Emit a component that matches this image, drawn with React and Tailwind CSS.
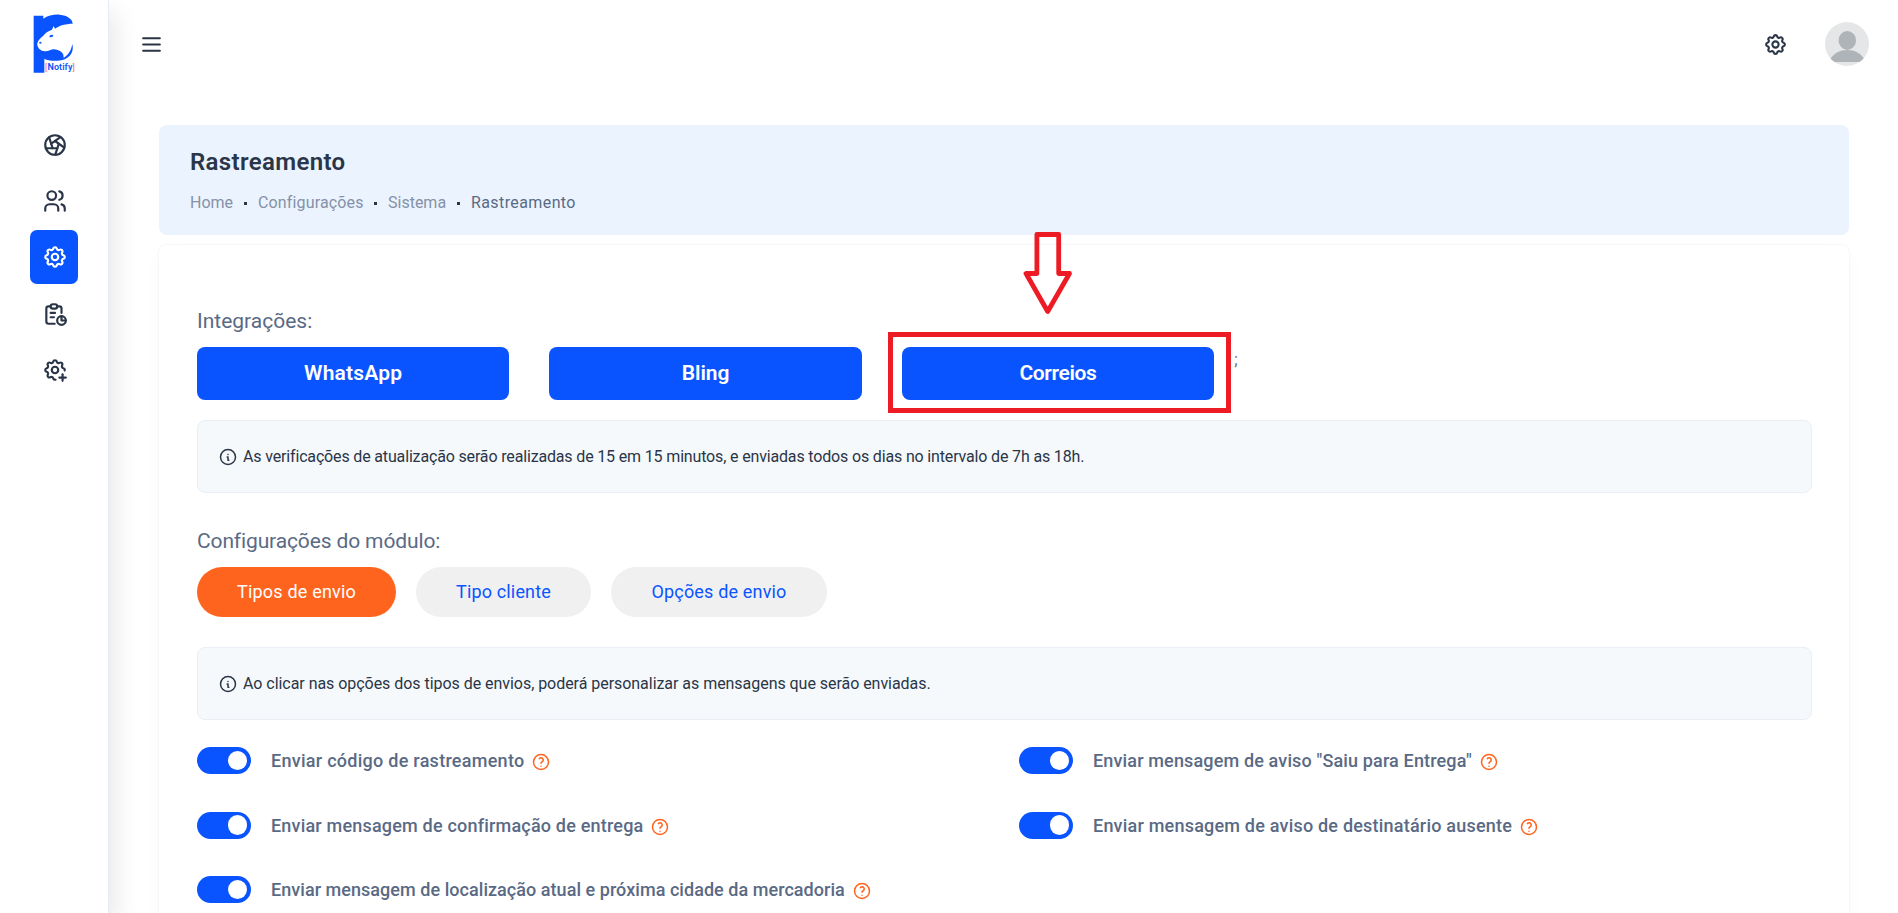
import {
  TbAperture,
  TbUsers,
  TbSettings,
  TbReport,
  TbSettingsPlus,
  TbMenu2,
  TbInfoCircle,
  TbHelp,
} from "react-icons/tb";

const navItems = [
  { name: "inicio", Icon: TbAperture },
  { name: "clientes", Icon: TbUsers },
  { name: "configuracoes", Icon: TbSettings, active: true },
  { name: "relatorios", Icon: TbReport },
  { name: "avancado", Icon: TbSettingsPlus },
];

function Logo() {
  return (
    <div className="relative h-[60px] w-[46px]">
      <svg viewBox="98 42 138 180" className="h-[60px] w-[46px]" fill="#0a54ff">
        <path d="M100 47H129V56C142 46 162 43 178 44C202 46 217 58 217 71C205 71 198 73 188 75C180 77 172 81 164 86L160 78L155 89C143 93 134 99 129 107C119 115 110 124 111 135C113 145 121 153 133 154C146 155 150 148 161 148C174 149 183 154 188 162C190 168 190 172 190 174C206 163 213 149 216 132C223 158 205 181 172 182C154 183 141 181 132 176V218H100Z" />
        <ellipse cx="153" cy="108" rx="6" ry="3.5" transform="rotate(-20 153 108)" />
        <ellipse cx="120" cy="128" rx="3.5" ry="3" />
      </svg>
      <span className="absolute top-[47px] left-[12.5px] text-[9px] leading-[12px] font-semibold tracking-[0.08px] whitespace-nowrap text-[#0a54ff]">
        <span className="font-normal text-[#ff6a2b]">[</span>Notify
        <span className="font-normal text-[#ff6a2b]">]</span>
      </span>
    </div>
  );
}

function Sidebar() {
  return (
    <aside className="z-10 flex w-[109px] shrink-0 flex-col items-center border-r border-[#e5eaf4] bg-white pt-[14px] shadow-[7px_12px_24px_0_rgba(0,0,0,0.09)]">
      <div className="pl-[3px]">
        <Logo />
      </div>
      <nav className="mt-[43px] flex flex-col gap-[2.4px]">
        {navItems.map(({ name, Icon, active }) => (
          <a
            key={name}
            className={
              active
                ? "flex h-[54px] w-12 items-center justify-center rounded-[7px] bg-[#0a54ff] pt-px pl-[2px] text-white"
                : "flex h-[54px] w-12 items-center justify-center rounded-[7px] pt-px pl-[2px] text-[#2a3547]"
            }
          >
            <Icon size={26} />
          </a>
        ))}
      </nav>
    </aside>
  );
}

function Avatar() {
  return (
    <svg viewBox="0 0 44 44" className="h-11 w-11 rounded-full">
      <rect width="44" height="44" fill="#e4e6e7" />
      <ellipse cx="22.3" cy="18.4" rx="8.7" ry="9.5" fill="#aeb4b7" />
      <path d="M5.5 40V36.5C9 31 15 27.9 22.3 27.9S35.500 31 39 36.500V40Z" fill="#aeb4b7" />
    </svg>
  );
}

function Header() {
  return (
    <header className="flex h-[88px] items-center justify-between pr-[29px] pl-[30px] text-[#2a3547]">
      <TbMenu2 size={25} />
      <div className="flex items-center gap-[37px]">
        <TbSettings size={25} />
        <Avatar />
      </div>
    </header>
  );
}

function Dot() {
  return <span className="h-[3px] w-[3px] bg-[#2a3547]" />;
}

function PageBanner() {
  return (
    <section className="mt-[37px] h-[110px] rounded-[8px] bg-[#ebf3fe] pt-[21px] pl-[31px]">
      <h1 className="text-2xl leading-8 font-semibold tracking-[0.35px] text-[#2a3547]">Rastreamento</h1>
      <div className="mt-[13px] flex items-center text-base leading-6 text-[#8591a8]">
        <span className="w-[43px]">Home</span>
        <span className="flex w-[25px] justify-center"><Dot /></span>
        <span className="w-[105px] tracking-[0.15px]">Configurações</span>
        <span className="flex w-[25px] justify-center"><Dot /></span>
        <span className="w-[58px]">Sistema</span>
        <span className="flex w-[25px] justify-center"><Dot /></span>
        <span className="tracking-[0.4px] text-[#5a6a85]">Rastreamento</span>
      </div>
    </section>
  );
}

function InfoBox({ children }) {
  return (
    <div className="flex h-[73px] items-center gap-[5px] rounded-[8px] border border-[#e9eff4] bg-[#f5f9fc] pl-[20px] text-base leading-6 text-[#2a3547]">
      <TbInfoCircle size={20} strokeWidth={1.8} />
      {children}
    </div>
  );
}

function DownArrow() {
  return (
    <svg
      viewBox="0 0 50 85"
      className="absolute -top-[116px] left-[121px] h-[85px] w-[50px]"
      fill="none"
      stroke="#ed1c24"
      strokeWidth="4.8"
      strokeLinejoin="round"
    >
      <path d="M13.900 3.500H35.700V42.500H46.500L24.700 80.500L3 42.500H13.900Z" />
    </svg>
  );
}

function IntegrationButton({ className, children }) {
  return (
    <button
      className={
        "h-[53px] w-[312.4px] rounded-[8px] bg-[#0a54ff] text-[21px] leading-[53px] font-semibold text-white " + className
      }
    >
      {children}
    </button>
  );
}

function Integrations() {
  return (
    <div className="mt-[10px] flex gap-10">
      <IntegrationButton className="tracking-[0.2px]">WhatsApp</IntegrationButton>
      <IntegrationButton className="tracking-[-0.05px]">Bling</IntegrationButton>
      <div className="relative flex">
        <IntegrationButton className="tracking-[-0.37px]">Correios</IntegrationButton>
        <div className="pointer-events-none absolute -top-[15px] -left-[14px] h-[81px] w-[343px] border-[5px] border-[#ed1c24]" />
        <DownArrow />
        <span className="mt-px ml-[20px] text-base leading-6 text-[#5a6a85]">;</span>
      </div>
    </div>
  );
}

function SwitchRow({ className, children }) {
  return (
    <div className="flex h-[27px] items-center">
      <span className="flex h-[27px] w-[54px] items-center justify-end rounded-full bg-[#0a54ff] pr-1">
        <span className="h-[19.5px] w-[19.5px] rounded-full bg-white" />
      </span>
      <span className={"ml-5 text-lg leading-[27px] font-medium whitespace-nowrap text-[#5a6a85] " + className}>
        {children}
      </span>
      <TbHelp size={20} strokeWidth={1.8} className="mt-[3px] ml-[7px] text-[#ff641e]" />
    </div>
  );
}

export default function App() {
  return (
    <div className="flex h-[913px] w-full overflow-hidden bg-white font-['Roboto',sans-serif]">
      <Sidebar />
      <div className="min-w-0 flex-1">
        <Header />
        <main className="pr-[49px] pl-[50px]">
          <PageBanner />
          <section className="mt-[10px] h-[760px] rounded-[8px] bg-white pr-[37px] pl-[38px] pt-[60px] shadow-[0_0_3px_rgba(0,0,0,0.08),0_10px_24px_rgba(0,0,0,0.025)]">
            <h2 className="text-[21px] leading-8 tracking-[0px] text-[#5a6a85]">Integrações:</h2>
            <Integrations />
            <div className="mt-5">
              <InfoBox>
                <p className="tracking-[-0.158px]">
                  As verificações de atualização serão realizadas de 15 em 15 minutos, e enviadas todos os dias no
                  intervalo de 7h as 18h.
                </p>
              </InfoBox>
            </div>
            <h2 className="mt-8 text-[21px] leading-8 tracking-[-0.13px] text-[#5a6a85]">Configurações do módulo:</h2>
            <div className="mt-[10px] flex gap-5 text-lg leading-[50px]">
              <button className="h-[50px] w-[199px] rounded-full bg-[#ff641e] tracking-[0.2px] text-white">
                Tipos de envio
              </button>
              <button className="h-[50px] w-[175px] rounded-full bg-[#f0f0f0] tracking-[0.16px] text-[#0a54ff]">
                Tipo cliente
              </button>
              <button className="h-[50px] w-[216px] rounded-full bg-[#f0f0f0] tracking-[0.17px] text-[#0a54ff]">
                Opções de envio
              </button>
            </div>
            <div className="mt-[30px]">
              <InfoBox>
                <p className="tracking-[-0.042px]">
                  Ao clicar nas opções dos tipos de envios, poderá personalizar as mensagens que serão enviadas.
                </p>
              </InfoBox>
            </div>
            <div className="mt-[27px] grid grid-cols-[822px_1fr] gap-y-[37.5px]">
              <SwitchRow className="tracking-[0.27px]">Enviar código de rastreamento</SwitchRow>
              <SwitchRow className="tracking-[0.146px]">Enviar mensagem de aviso "Saiu para Entrega"</SwitchRow>
              <SwitchRow className="tracking-[0.192px]">Enviar mensagem de confirmação de entrega</SwitchRow>
              <SwitchRow className="tracking-[0.207px]">Enviar mensagem de aviso de destinatário ausente</SwitchRow>
              <SwitchRow className="tracking-[0.045px]">
                Enviar mensagem de localização atual e próxima cidade da mercadoria
              </SwitchRow>
            </div>
          </section>
        </main>
      </div>
    </div>
  );
}
